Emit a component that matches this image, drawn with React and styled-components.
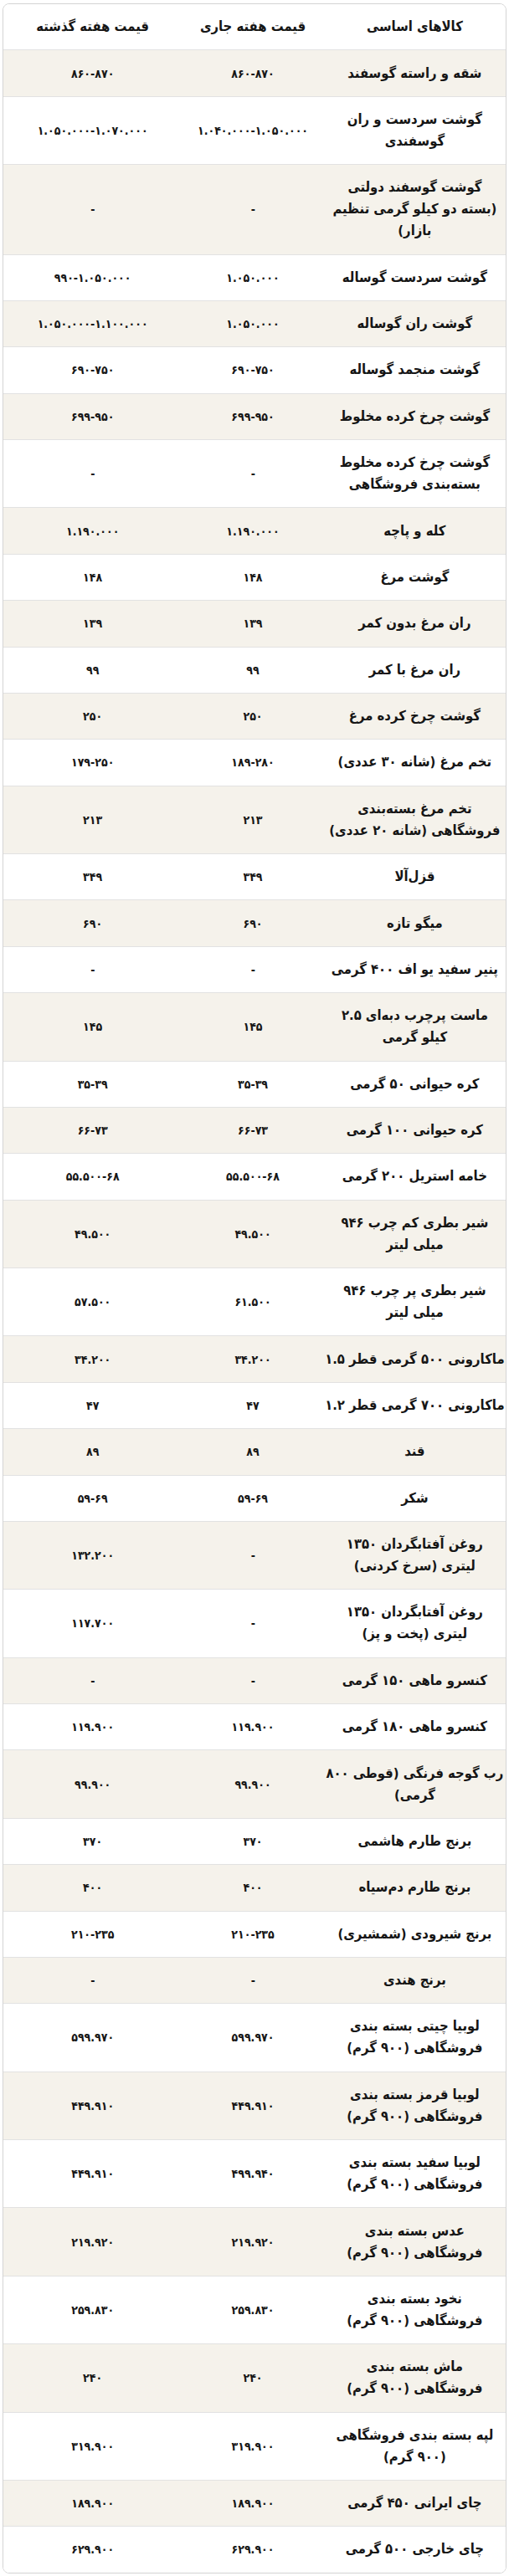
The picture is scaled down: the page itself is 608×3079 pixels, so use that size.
import React from "react";
import styled, { createGlobalStyle } from "styled-components";

const GlobalStyle = createGlobalStyle`
  html, body {
    margin: 0;
    padding: 0;
    background: #ffffff;
  }
  body {
    font-family: "DejaVu Sans Condensed", "DejaVu Sans", sans-serif;
  }
`;

const Page = styled.div`
  padding: 4px 3px 4px 3px;
`;

const Table = styled.div`
  direction: rtl;
  border: 1px solid #d4d4d4;
  border-radius: 8px;
  overflow: hidden;
  background: #ffffff;
`;

const Row = styled.div`
  display: grid;
  grid-template-columns: 218fr 170fr 214fr;
  background: ${(p) => (p.$shaded ? "#f5f2eb" : "#ffffff")};
  border-top: 1px solid #e2e2e2;
  &:first-child {
    border-top: none;
  }
`;

const Cell = styled.div`
  display: flex;
  align-items: center;
  justify-content: center;
  text-align: center;
  padding: 14.2px 2px;
  white-space: pre;
  font-family: "DejaVu Sans Condensed", "DejaVu Sans", sans-serif;
  font-size: ${(p) => (p.$num ? "14px" : "16.5px")};
  letter-spacing: ${(p) => (p.$num ? "-0.6px" : "0")};
  line-height: 26px;
  font-weight: 700;
  color: #161616;
  min-width: 0;
`;

const header = ["کالاهای اساسی", "قیمت هفته جاری", "قیمت هفته گذشته"];

const rows = [
  ["شقه و راسته گوسفند", "۸۶۰-۸۷۰", "۸۶۰-۸۷۰"],
  ["گوشت سردست و ران\nگوسفندی", "۱.۰۴۰.۰۰۰-۱.۰۵۰.۰۰۰", "۱.۰۵۰.۰۰۰-۱.۰۷۰.۰۰۰"],
  ["گوشت گوسفند دولتی\n(بسته دو کیلو گرمی تنظیم\nبازار)", "-", "-"],
  ["گوشت سردست گوساله", "۱.۰۵۰.۰۰۰", "۹۹۰-۱.۰۵۰.۰۰۰"],
  ["گوشت ران گوساله", "۱.۰۵۰.۰۰۰", "۱.۰۵۰.۰۰۰-۱.۱۰۰.۰۰۰"],
  ["گوشت منجمد گوساله", "۶۹۰-۷۵۰", "۶۹۰-۷۵۰"],
  ["گوشت چرخ کرده مخلوط", "۶۹۹-۹۵۰", "۶۹۹-۹۵۰"],
  ["گوشت چرخ کرده مخلوط\nبسته‌بندی فروشگاهی", "-", "-"],
  ["کله و پاچه", "۱.۱۹۰.۰۰۰", "۱.۱۹۰.۰۰۰"],
  ["گوشت مرغ", "۱۴۸", "۱۴۸"],
  ["ران مرغ بدون کمر", "۱۳۹", "۱۳۹"],
  ["ران مرغ با کمر", "۹۹", "۹۹"],
  ["گوشت چرخ کرده مرغ", "۲۵۰", "۲۵۰"],
  ["تخم مرغ (شانه ۳۰ عددی)", "۱۸۹-۲۸۰", "۱۷۹-۲۵۰"],
  ["تخم مرغ بسته‌بندی\nفروشگاهی (شانه ۲۰ عددی)", "۲۱۳", "۲۱۳"],
  ["قزل‌آلا", "۳۴۹", "۳۴۹"],
  ["میگو تازه", "۶۹۰", "۶۹۰"],
  ["پنیر سفید یو اف ۴۰۰ گرمی", "-", "-"],
  ["ماست پرچرب دبه‌ای ۲.۵\nکیلو گرمی", "۱۴۵", "۱۴۵"],
  ["کره حیوانی ۵۰ گرمی", "۳۵-۳۹", "۳۵-۳۹"],
  ["کره حیوانی ۱۰۰ گرمی", "۶۶-۷۳", "۶۶-۷۳"],
  ["خامه استریل ۲۰۰ گرمی", "۵۵.۵۰۰-۶۸", "۵۵.۵۰۰-۶۸"],
  ["شیر بطری کم چرب ۹۴۶\nمیلی لیتر", "۴۹.۵۰۰", "۴۹.۵۰۰"],
  ["شیر بطری پر چرب ۹۴۶\nمیلی لیتر", "۶۱.۵۰۰", "۵۷.۵۰۰"],
  ["ماکارونی ۵۰۰ گرمی قطر ۱.۵", "۳۴.۲۰۰", "۳۴.۲۰۰"],
  ["ماکارونی ۷۰۰ گرمی قطر ۱.۲", "۴۷", "۴۷"],
  ["قند", "۸۹", "۸۹"],
  ["شکر", "۵۹-۶۹", "۵۹-۶۹"],
  ["روغن آفتابگردان ۱۳۵۰\nلیتری (سرخ کردنی)", "-", "۱۳۲.۲۰۰"],
  ["روغن آفتابگردان ۱۳۵۰\nلیتری (پخت و پز)", "-", "۱۱۷.۷۰۰"],
  ["کنسرو ماهی ۱۵۰ گرمی", "-", "-"],
  ["کنسرو ماهی ۱۸۰ گرمی", "۱۱۹.۹۰۰", "۱۱۹.۹۰۰"],
  ["رب گوجه فرنگی (قوطی ۸۰۰\nگرمی)", "۹۹.۹۰۰", "۹۹.۹۰۰"],
  ["برنج طارم هاشمی", "۳۷۰", "۳۷۰"],
  ["برنج طارم دم‌سیاه", "۴۰۰", "۴۰۰"],
  ["برنج شیرودی (شمشیری)", "۲۱۰-۲۳۵", "۲۱۰-۲۳۵"],
  ["برنج هندی", "-", "-"],
  ["لوبیا چیتی بسته بندی\nفروشگاهی (۹۰۰ گرم)", "۵۹۹.۹۷۰", "۵۹۹.۹۷۰"],
  ["لوبیا قرمز بسته بندی\nفروشگاهی (۹۰۰ گرم)", "۴۴۹.۹۱۰", "۴۴۹.۹۱۰"],
  ["لوبیا سفید بسته بندی\nفروشگاهی (۹۰۰ گرم)", "۴۹۹.۹۴۰", "۴۴۹.۹۱۰"],
  ["عدس بسته بندی\nفروشگاهی (۹۰۰ گرم)", "۲۱۹.۹۲۰", "۲۱۹.۹۲۰"],
  ["نخود بسته بندی\nفروشگاهی (۹۰۰ گرم)", "۲۵۹.۸۳۰", "۲۵۹.۸۳۰"],
  ["ماش بسته بندی\nفروشگاهی (۹۰۰ گرم)", "۲۴۰", "۲۴۰"],
  ["لپه بسته بندی فروشگاهی\n(۹۰۰ گرم)", "۳۱۹.۹۰۰", "۳۱۹.۹۰۰"],
  ["چای ایرانی ۴۵۰ گرمی", "۱۸۹.۹۰۰", "۱۸۹.۹۰۰"],
  ["چای خارجی ۵۰۰ گرمی", "۶۲۹.۹۰۰", "۶۲۹.۹۰۰"],
];

export default function App() {
  return (
    <>
      <GlobalStyle />
      <Page>
        <Table>
          <Row>
            {header.map((h) => (
              <Cell key={h}>{h}</Cell>
            ))}
          </Row>
          {rows.map((r, i) => (
            <Row key={i} $shaded={i % 2 === 0}>
              {r.map((c, j) => (
                <Cell key={j} $num={j > 0}>
                  {c}
                </Cell>
              ))}
            </Row>
          ))}
        </Table>
      </Page>
    </>
  );
}
